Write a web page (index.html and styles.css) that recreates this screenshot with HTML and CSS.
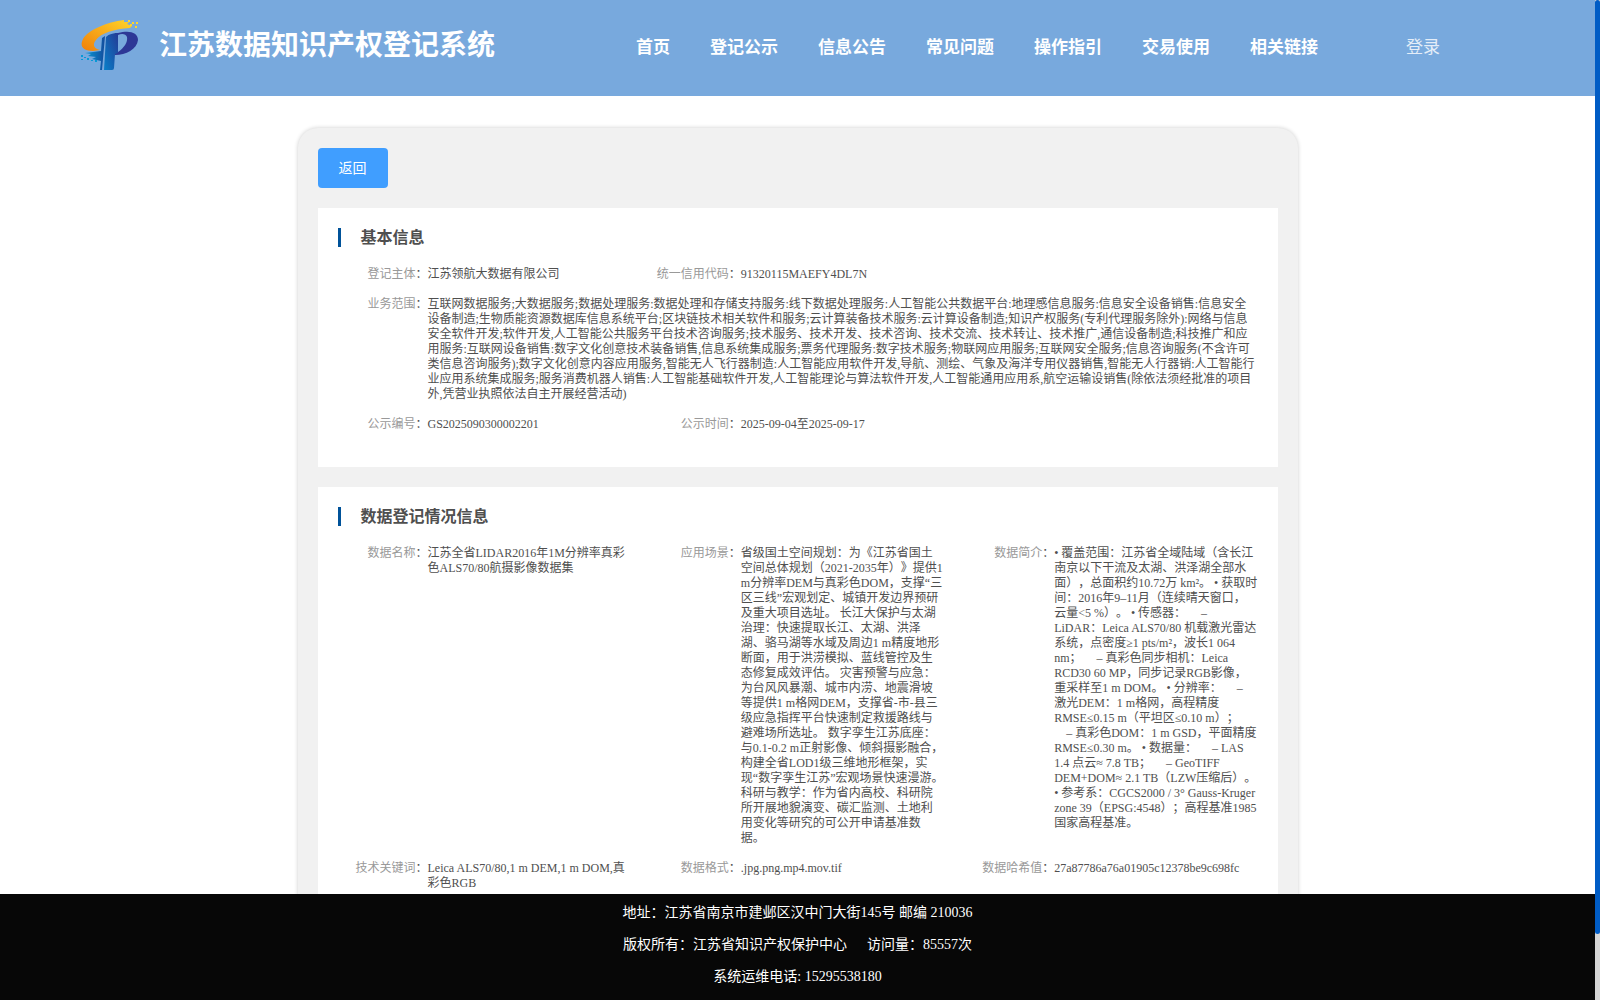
FILE: index.html
```html
<!DOCTYPE html>
<html lang="zh-CN">
<head>
<meta charset="utf-8">
<title>江苏数据知识产权登记系统</title>
<link rel="stylesheet" href="styles.css">
</head>
<body>
<div class="page">
  <header class="header">
    <svg class="logo" viewBox="0 0 60 52" aria-hidden="true">
      <defs>
        <linearGradient id="gold" x1="0" y1="1" x2="1" y2="0"><stop offset="0" stop-color="#f07f09"/><stop offset="1" stop-color="#ffd52a"/></linearGradient>
        <linearGradient id="blue" x1="0" y1="0" x2="1" y2="0"><stop offset="0" stop-color="#0899d6"/><stop offset="1" stop-color="#134b9c"/></linearGradient>
        <linearGradient id="stem" x1="0" y1="1" x2="1" y2="0"><stop offset="0" stop-color="#087fc8"/><stop offset="1" stop-color="#243b96"/></linearGradient>
      </defs>
      <path fill="url(#gold)" d="M44 1C27 3 8 11 3 20C-1 28 4 32 13 32L20 31C14 30 12 26 16 21C21 14 34 10 50 9L52 7L47 5L49 3L44 3Z"/>
      <path fill="#2d3796" d="M38 14C49 11 58 13 58 21C57 30 46 36 35 36L35 14ZM38 16V33C44 29 48 23 47 18C46 15 42 14 38 16Z" fill-rule="evenodd"/>
      <path fill="url(#stem)" d="M26 18C29 15 33 14 38 14V34L35 35L34 49Q34 51 32 51H24Z"/>
      <path fill="url(#blue)" d="M5 34L21 32L22 19L25 17L22 51H20L21 42L12 40L16 38L8 37L11 35Z"/>
      <path fill="#ffd52a" d="M48 1h2v2h-2zM52 3h2v2h-2zM56 3h2v2h-2zM50 5h2v2h-2zM55 7h2v2h-2z"/>
      <path fill="#0899d6" d="M1 36h2v2h-2zM4 38h2v1h-2zM1 40h2v1h-2zM7 39h2v2h-2zM11 41h2v1h-2zM15 41h2v2h-2z"/>
    </svg>
    <h1 class="site-name">江苏数据知识产权登记系统</h1>
    <nav class="nav">
      <a href="#">首页</a>
      <a href="#">登记公示</a>
      <a href="#">信息公告</a>
      <a href="#">常见问题</a>
      <a href="#">操作指引</a>
      <a href="#">交易使用</a>
      <a href="#">相关链接</a>
    </nav>
    <a class="login" href="#">登录</a>
  </header>

  <main class="main">
    <div class="panel">
      <button class="back" type="button">返回</button>

      <section class="card">
        <h2 class="card-title">基本信息</h2>
        <dl class="fields">
          <div class="field"><dt>登记主体<span>：</span></dt><dd>江苏领航大数据有限公司</dd></div>
          <div class="field field-rest"><dt>统一信用代码<span>：</span></dt><dd>91320115MAEFY4DL7N</dd></div>
          <div class="field field-full"><dt>业务范围<span>：</span></dt><dd>互联网数据服务;大数据服务;数据处理服务:数据处理和存储支持服务:线下数据处理服务:人工智能公共数据平台:地理感信息服务:信息安全设备销售:信息安全设备制造;生物质能资源数据库信息系统平台;区块链技术相关软件和服务;云计算装备技术服务:云计算设备制造;知识产权服务(专利代理服务除外):网络与信息安全软件开发;软件开发,人工智能公共服务平台技术咨询服务;技术服务、技术开发、技术咨询、技术交流、技术转让、技术推广,通信设备制造;科技推广和应用服务:互联网设备销售:数字文化创意技术装备销售,信息系统集成服务;票务代理服务:数字技术服务;物联网应用服务;互联网安全服务;信息咨询服务(不含许可类信息咨询服务);数字文化创意内容应用服务,智能无人飞行器制造:人工智能应用软件开发,导航、测绘、气象及海洋专用仪器销售,智能无人行器销:人工智能行业应用系统集成服务;服务消费机器人销售:人工智能基础软件开发,人工智能理论与算法软件开发,人工智能通用应用系,航空运输设销售(除依法须经批准的项目外,凭营业执照依法自主开展经营活动)</dd></div>
          <div class="field"><dt>公示编号<span>：</span></dt><dd>GS2025090300002201</dd></div>
          <div class="field"><dt>公示时间<span>：</span></dt><dd>2025-09-04至2025-09-17</dd></div>
        </dl>
      </section>

      <section class="card">
        <h2 class="card-title">数据登记情况信息</h2>
        <dl class="fields">
          <div class="field"><dt>数据名称<span>：</span></dt><dd>江苏全省LIDAR2016年1M分辨率真彩色ALS70/80航摄影像数据集</dd></div>
          <div class="field"><dt>应用场景<span>：</span></dt><dd>省级国土空间规划：为《江苏省国土空间总体规划（2021-2035年）》提供1 m分辨率DEM与真彩色DOM，支撑“三区三线”宏观划定、城镇开发边界预研及重大项目选址。 长江大保护与太湖治理：快速提取长江、太湖、洪泽湖、骆马湖等水域及周边1 m精度地形断面，用于洪涝模拟、蓝线管控及生态修复成效评估。 灾害预警与应急：为台风风暴潮、城市内涝、地震滑坡等提供1 m格网DEM，支撑省-市-县三级应急指挥平台快速制定救援路线与避难场所选址。 数字孪生江苏底座：与0.1-0.2 m正射影像、倾斜摄影融合，构建全省LOD1级三维地形框架，实现&NoBreak;“数字孪生江苏”宏观场景快速漫游。 科研与教学：作为省内高校、科研院所开展地貌演变、碳汇监测、土地利用变化等研究的可公开申请基准数据。</dd></div>
          <div class="field"><dt>数据简介<span>：</span></dt><dd>• 覆盖范围：江苏省全域陆域（含长江南京以下干流及太湖、洪泽湖全部水面），总面积约10.72万 km²。 • 获取时间：2016年9–11月（连续晴天窗口，云量&lt;5 %）。 • 传感器： 　– LiDAR：Leica ALS70/80 机载激光雷达系统，点密度≥1 pts/m²，波长1 064 nm； 　– 真彩色同步相机：Leica RCD30 60 MP，同步记录RGB影像，重采样至1 m DOM。 • 分辨率： 　– 激光DEM：1 m格网，高程精度RMSE≤0.15 m（平坦区≤0.10 m）； 　– 真彩色DOM：1 m GSD，平面精度RMSE≤0.30 m。 • 数据量： 　– LAS 1.4 点云≈ 7.8 TB； 　– GeoTIFF DEM+DOM≈ 2.1 TB（LZW压缩后）。 • 参考系：CGCS2000 / 3° Gauss-Kruger zone 39（EPSG:4548）；高程基准1985国家高程基准。</dd></div>
          <div class="field"><dt>技术关键词<span>：</span></dt><dd>Leica ALS70/80,1 m DEM,1 m DOM,真彩色RGB</dd></div>
          <div class="field"><dt>数据格式<span>：</span></dt><dd>.jpg.png.mp4.mov.tif</dd></div>
          <div class="field"><dt>数据哈希值<span>：</span></dt><dd>27a87786a76a01905c12378be9c698fc</dd></div>
        </dl>
      </section>
    </div>
  </main>

  <footer class="footer">
    <p>地址：江苏省南京市建邺区汉中门大街145号 邮编 210036</p>
    <p><span>版权所有：江苏省知识产权保护中心</span><span class="visits">访问量：85557次</span></p>
    <p>系统运维电话: 15295538180</p>
  </footer>
</div>
<div class="rail"><div class="thumb"></div></div>
</body>
</html>
```
FILE: styles.css
```css
* { box-sizing: border-box; }

body {
  margin: 0;
  display: flex;
  height: 100vh;
  overflow: hidden;
  background: #fff;
  color: #4f4f4f;
  font-family: "Liberation Serif", "Noto Sans CJK SC", serif;
  font-size: 12px;
  line-height: 15px;
  text-spacing-trim: space-all;
  text-autospace: no-autospace;
}

h1, h2, p, dl, dd { margin: 0; }
a { color: inherit; text-decoration: none; }

.page {
  flex: 1;
  min-width: 0;
  display: flex;
  flex-direction: column;
}

.header {
  flex: none;
  height: 96px;
  padding-left: 80px;
  display: flex;
  align-items: center;
  background: #78a9dd;
  color: #fff;
}
.logo {
  width: 60px;
  height: 52px;
  margin-bottom: 6px;
}
.site-name {
  margin-left: 19px;
  padding-bottom: 4px;
  font-size: 28px;
  line-height: 40px;
}
.nav {
  display: flex;
  gap: 40px;
  margin-left: 141px;
  font-size: 17px;
  font-weight: bold;
  line-height: 24px;
}
.login {
  margin-left: 88px;
  font-size: 17px;
  line-height: 24px;
  opacity: .8;
}

.main {
  flex: 1;
  min-height: 0;
  overflow-y: auto;
  scrollbar-width: none;
  padding: 32px 20px;
}
.panel {
  max-width: 1000px;
  margin: 0 auto;
  padding: 20px;
  border-radius: 20px;
  background: #f1f1f1;
  box-shadow: 0 0 4px rgba(0, 0, 0, .2);
}
.back {
  display: block;
  width: 70px;
  height: 40px;
  padding: 0 0 2px;
  border: 0;
  border-radius: 4px;
  background: #409eff;
  color: #fff;
  font-family: inherit;
  font-size: 14px;
}

.card {
  margin-top: 20px;
  padding: 20px 20px 35px 0;
  background: #fff;
}
.card-title {
  margin: 0 0 20px 20px;
  padding-left: 20px;
  border-left: 3px solid #005299;
  font-size: 16px;
  line-height: 19px;
}
.fields {
  display: grid;
  grid-template-columns: repeat(3, 1fr);
  row-gap: 15px;
}
.field {
  display: flex;
  min-width: 0;
}
.field-rest { grid-column: span 2; }
.field-full { grid-column: span 3; }
.field dt {
  flex: none;
  width: 110px;
  text-align: right;
  color: #999;
}
.field dt span { color: #4f4f4f; }
.field dd {
  flex: 1;
  min-width: 0;
}

.footer {
  flex: none;
  padding: 3px 0 7px;
  background: #070707;
  color: #fff;
  font-size: 14px;
  line-height: 32px;
  text-align: center;
}
.visits { margin-left: 20px; }

.rail {
  flex: none;
  width: 5px;
  background: #d5d5d5;
}
.thumb {
  height: 93.4%;
  border-radius: 3px;
  background: #005cc5;
}
```
